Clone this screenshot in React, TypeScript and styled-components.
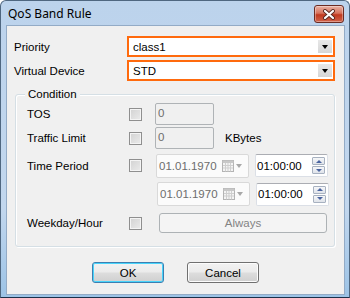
import { FC } from 'react';
import styled, { createGlobalStyle } from 'styled-components';

const Global = createGlobalStyle`
    html, body {
        margin: 0;
        padding: 0;
        background: #ffffff;
    }
    * {
        box-sizing: border-box;
    }
`

const BODY_FONT = `"Liberation Sans", Arial, sans-serif`

const Window = styled.div`
    width: 350px;
    height: 298px;
    display: flex;
    flex-direction: column;
    border: 1px solid #4f6780;
    border-bottom-color: #1c2f48;
    border-radius: 6px 6px 0 0;
    background: linear-gradient(180deg, #bcd3ec 0%, #c2d7ee 70%, #9cc3e6 100%);
    overflow: hidden;
`

const TitleBar = styled.div`
    height: 25px;
    flex: none;
    display: flex;
    align-items: flex-start;
    justify-content: space-between;
    padding: 0 5px 0 7px;
`

const Title = styled.span`
    margin-top: 5px;
    font-family: "Noto Sans", "Open Sans", sans-serif;
    font-size: 12px;
    line-height: 16px;
    color: #000000;
`

const CloseButton = styled.div`
    margin-top: 4px;
    width: 30px;
    height: 18px;
    display: flex;
    align-items: center;
    justify-content: center;
    border: 1px solid #6b2b22;
    border-radius: 3px;
    background: linear-gradient(180deg, #e9b2a4 0%, #d7735d 45%, #c0391f 55%, #d1634a 100%);
    box-shadow: inset 0 0 0 1px rgba(255,255,255,0.35);
`

const Client = styled.div`
    flex: 1;
    margin: 0 5px 3px 6px;
    background: #f0f0f0;
    box-shadow: 0 0 0 1px #93abc6;
    padding: 10px 9px 0 7px;
    display: flex;
    flex-direction: column;
    font-family: ${BODY_FONT};
    font-size: 11px;
    color: #000000;
`

const FieldRow = styled.div<{ $top?: number }>`
    height: 21px;
    margin-top: ${p => p.$top ?? 0}px;
    display: flex;
    align-items: center;
`

const FieldLabel = styled.span`
    width: 113px;
    font-size: 11.5px;
`

const Combo = styled.div`
    width: 208px;
    height: 21px;
    display: flex;
    align-items: center;
    border: 2px solid #ff6a0d;
    background: #ffffff;
    padding: 0 1px 0 4px;
`

const ComboText = styled.span`
    flex: 1;
    font-size: 11.5px;
`

const DropButton = styled.div`
    width: 14px;
    height: 13px;
    display: flex;
    align-items: center;
    justify-content: center;
    background: linear-gradient(180deg, #e8e8e8 0%, #d6d6d6 100%);
`

const Arrow = styled.div<{ $color?: string }>`
    width: 0;
    height: 0;
    border-left: 3.5px solid transparent;
    border-right: 3.5px solid transparent;
    border-top: 4px solid ${p => p.$color ?? '#000000'};
`

const Group = styled.div`
    position: relative;
    margin: 13px 0 0 1px;
    width: 320px;
    border: 1px solid #d5dfe5;
    border-radius: 3px;
    box-shadow: inset 1px 1px 0 #ffffff, 1px 1px 0 #ffffff;
    padding: 8px 0 13px 11px;
`

const Legend = styled.span`
    position: absolute;
    top: -8px;
    left: 9px;
    padding: 0 3px;
    background: #f0f0f0;
    font-size: 11.5px;
    line-height: 14px;
`

const CondRow = styled.div<{ $h: number; $top?: number }>`
    height: ${p => p.$h}px;
    margin-top: ${p => p.$top ?? 0}px;
    display: flex;
    align-items: center;
`

const CondLabel = styled.span`
    width: 102px;
    flex: none;
    font-size: 11.5px;
`

const CheckCell = styled.div`
    width: 26px;
    flex: none;
    display: flex;
    align-items: center;
`

const CheckBox = styled.div`
    width: 13px;
    height: 13px;
    border: 1px solid #8f8f8f;
    background: linear-gradient(135deg, #d2d2d2 0%, #ebebeb 100%);
    box-shadow: inset 0 0 0 1px #f4f4f4;
`

const DisabledInput = styled.div`
    width: 59px;
    height: 22px;
    border: 1px solid #afb3b6;
    border-radius: 2px;
    background: #f0f0f0;
    color: #6d6d6d;
    padding: 3px 0 0 2px;
    font-size: 11.5px;
`

const Unit = styled.span`
    margin-left: 11px;
    font-size: 11.5px;
`

const DateBox = styled.div<{ $shift?: number }>`
    width: 93px;
    height: 24px;
    margin-left: ${p => p.$shift ?? 0}px;
    display: flex;
    align-items: center;
    border: 1px solid #d9d9d9;
    border-radius: 2px;
    background: #fbfbfb;
    color: #6d6d6d;
    padding: 0 6px 0 2px;
    font-size: 11.5px;
`

const DateText = styled.span`
    flex: 1;
`

const CalIcon = styled.svg`
    width: 12px;
    height: 12px;
    margin-right: 2px;
`

const TimeBox = styled.div`
    width: 73px;
    height: 23px;
    margin-left: 6px;
    display: flex;
    align-items: center;
    border: 1px solid #dbdfe6;
    border-top-color: #abadb3;
    border-radius: 2px;
    background: #ffffff;
    padding: 0 2px 0 1px;
    font-size: 11.5px;
`

const TimeText = styled.span`
    flex: 1;
`

const Spinner = styled.div`
    width: 13px;
    display: flex;
    flex-direction: column;
    gap: 1px;
`

const SpinButton = styled.div<{ $up?: boolean }>`
    height: 8px;
    display: flex;
    align-items: center;
    justify-content: center;
    border: 1px solid #a7b1c0;
    border-radius: 1px;
    background: linear-gradient(180deg, #f6f7f9 0%, #dfe3ea 100%);
    &::after {
        content: '';
        width: 0;
        height: 0;
        border-left: 3px solid transparent;
        border-right: 3px solid transparent;
        ${p => p.$up ? 'border-bottom: 3px solid #4a64a0;' : 'border-top: 3px solid #4a64a0;'}
    }
`

const AlwaysButton = styled.div`
    width: 168px;
    height: 20px;
    margin-left: 4px;
    display: flex;
    align-items: center;
    justify-content: center;
    border: 1px solid #adb2b5;
    border-radius: 3px;
    background: #f4f4f4;
    color: #838383;
    font-size: 11.5px;
`

const ButtonBar = styled.div`
    margin-top: 15px;
    display: flex;
    justify-content: center;
    gap: 23px;
    padding-left: 2px;
`

const DialogButton = styled.div<{ $default?: boolean }>`
    width: 72px;
    height: 21px;
    display: flex;
    align-items: center;
    justify-content: center;
    border: 1px solid ${p => p.$default ? '#3c7fb1' : '#707070'};
    border-radius: 3px;
    background: linear-gradient(180deg, #f2f2f2 0%, #ebebeb 48%, #dddddd 52%, #cfcfcf 100%);
    box-shadow: ${p => p.$default ? 'inset 0 0 0 1px #48d4fb' : 'inset 0 0 0 1px #fcfcfc'};
    font-size: 11.5px;
`

const Check: FC = () => (
    <CheckCell><CheckBox /></CheckCell>
)

const DatePicker: FC<{ shift?: number }> = ({ shift }) => (
    <DateBox $shift={shift}>
        <DateText>01.01.1970</DateText>
        <CalIcon viewBox="0 0 12 12">
            <rect x="0.5" y="0.5" width="11" height="11" fill="#f4f4f4" stroke="#b4b4b4" />
            <rect x="0.5" y="0.5" width="11" height="2.5" fill="#c8c8c8" />
            <path d="M3.5 3v8.5M6 3v8.5M8.5 3v8.5M1 5.5h10M1 8h10" stroke="#cfcfcf" strokeWidth="1" />
        </CalIcon>
        <Arrow $color="#a8a8a8" />
    </DateBox>
)

const TimePicker: FC = () => (
    <TimeBox>
        <TimeText>01:00:00</TimeText>
        <Spinner>
            <SpinButton $up />
            <SpinButton />
        </Spinner>
    </TimeBox>
)

const App: FC = () => {
    return (
        <>
            <Global />
            <Window>
                <TitleBar>
                    <Title>QoS Band Rule</Title>
                    <CloseButton>
                        <svg width="14" height="11" viewBox="0 0 14 11">
                            <path d="M3 2l8 7M11 2l-8 7" stroke="#5a2a22" strokeWidth="4" strokeLinecap="round" />
                            <path d="M3 2l8 7M11 2l-8 7" stroke="#ffffff" strokeWidth="2.2" strokeLinecap="round" />
                        </svg>
                    </CloseButton>
                </TitleBar>
                <Client>
                    <FieldRow>
                        <FieldLabel>Priority</FieldLabel>
                        <Combo>
                            <ComboText>class1</ComboText>
                            <DropButton><Arrow /></DropButton>
                        </Combo>
                    </FieldRow>
                    <FieldRow $top={3}>
                        <FieldLabel>Virtual Device</FieldLabel>
                        <Combo>
                            <ComboText>STD</ComboText>
                            <DropButton><Arrow /></DropButton>
                        </Combo>
                    </FieldRow>

                    <Group>
                        <Legend>Condition</Legend>
                        <CondRow $h={22}>
                            <CondLabel>TOS</CondLabel>
                            <Check />
                            <DisabledInput>0</DisabledInput>
                        </CondRow>
                        <CondRow $h={22} $top={2}>
                            <CondLabel>Traffic Limit</CondLabel>
                            <Check />
                            <DisabledInput>0</DisabledInput>
                            <Unit>KBytes</Unit>
                        </CondRow>
                        <CondRow $h={25} $top={4}>
                            <CondLabel>Time Period</CondLabel>
                            <Check />
                            <DatePicker shift={1} />
                            <TimePicker />
                        </CondRow>
                        <CondRow $h={24} $top={4}>
                            <DatePicker shift={130} />
                            <TimePicker />
                        </CondRow>
                        <CondRow $h={20} $top={7}>
                            <CondLabel>Weekday/Hour</CondLabel>
                            <Check />
                            <AlwaysButton>Always</AlwaysButton>
                        </CondRow>
                    </Group>

                    <ButtonBar>
                        <DialogButton $default>OK</DialogButton>
                        <DialogButton>Cancel</DialogButton>
                    </ButtonBar>
                </Client>
            </Window>
        </>
    )
}

export default App
